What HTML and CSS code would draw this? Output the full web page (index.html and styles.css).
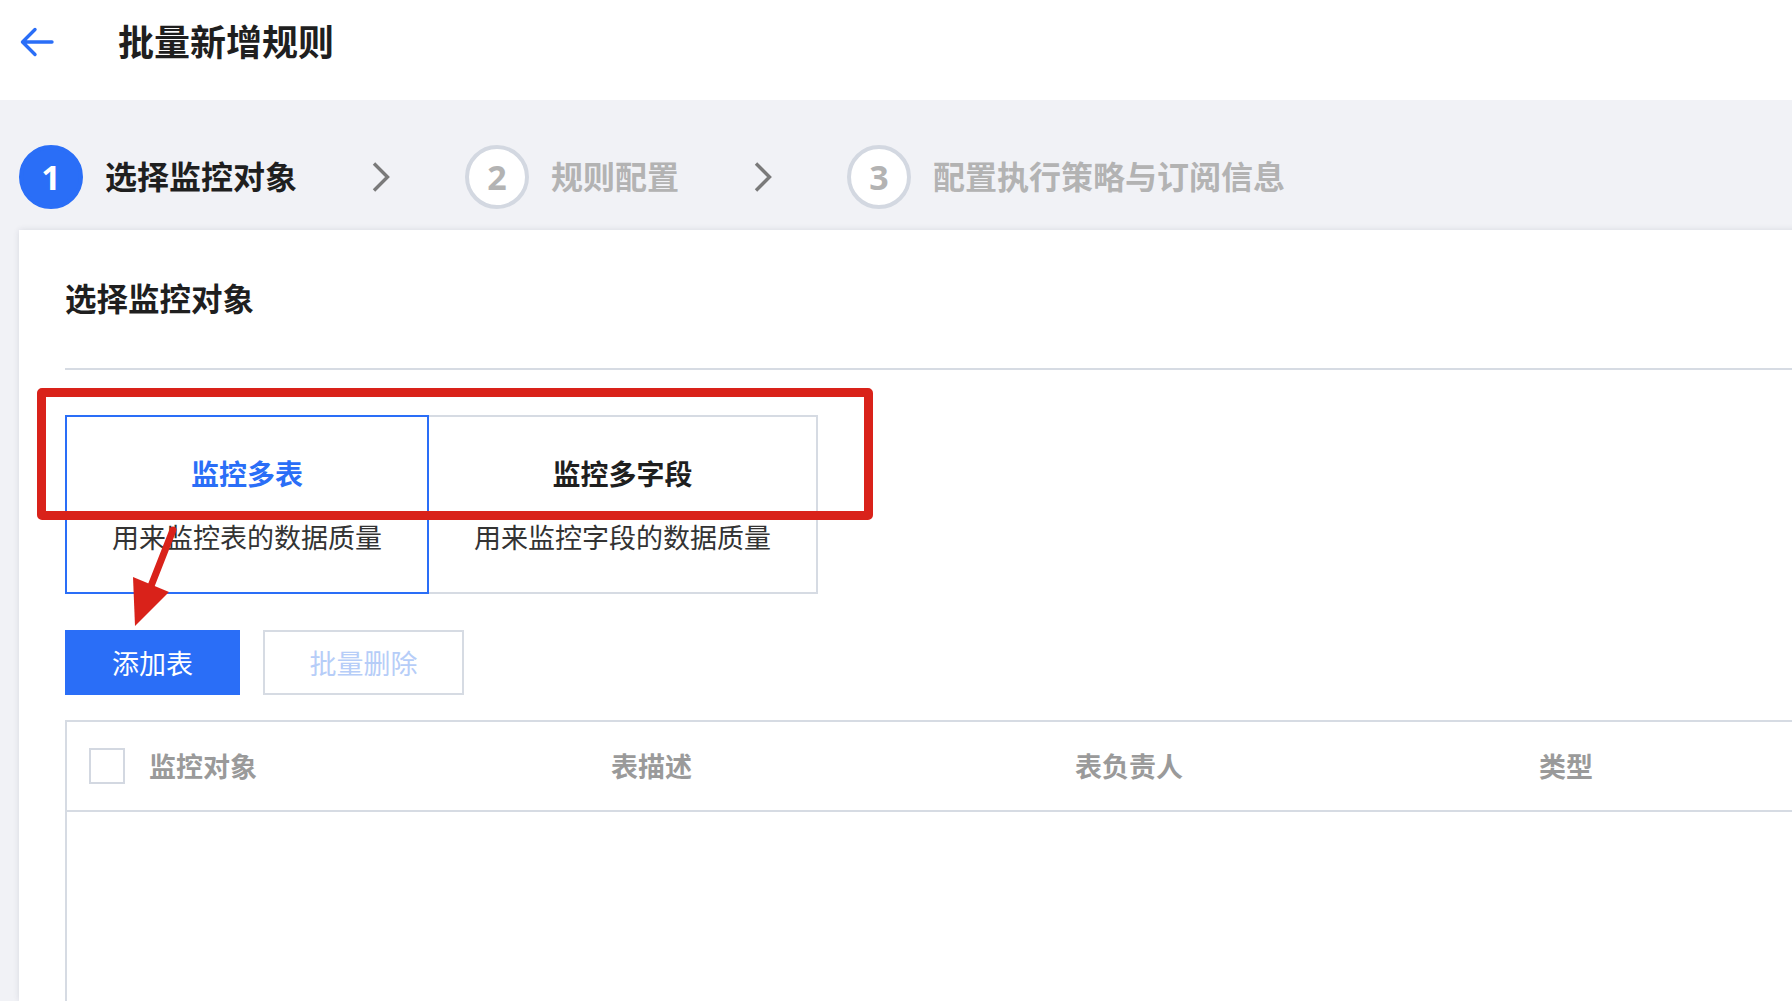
FILE: index.html
```html
<!DOCTYPE html>
<html lang="zh-CN">
<head>
<meta charset="utf-8">
<title>批量新增规则</title>
<link rel="stylesheet" href="styles.css">
</head>
<body>
<header class="topbar">
  <svg class="back" width="36" height="32" viewBox="0 0 36 32" aria-hidden="true">
    <path d="M34 16 H5 M17 3.5 L4.5 16 L17 28.5" fill="none" stroke="#2a6ef7" stroke-width="3.4" stroke-linecap="round" stroke-linejoin="round"/>
  </svg>
  <h1 class="page-title">批量新增规则</h1>
</header>

<nav class="steps">
  <div class="step active">
    <span class="step-num">1</span>
    <span class="step-label">选择监控对象</span>
  </div>
  <svg class="chev" width="20" height="32" viewBox="0 0 20 32" aria-hidden="true">
    <polyline points="3,2.5 16.5,16 3,29.5" fill="none" stroke="#7a7a7a" stroke-width="3.4"/>
  </svg>
  <div class="step">
    <span class="step-num">2</span>
    <span class="step-label">规则配置</span>
  </div>
  <svg class="chev" width="20" height="32" viewBox="0 0 20 32" aria-hidden="true">
    <polyline points="3,2.5 16.5,16 3,29.5" fill="none" stroke="#7a7a7a" stroke-width="3.4"/>
  </svg>
  <div class="step">
    <span class="step-num">3</span>
    <span class="step-label">配置执行策略与订阅信息</span>
  </div>
</nav>

<main class="card">
  <h2 class="card-title">选择监控对象</h2>
  <div class="divider"></div>

  <div class="tabs">
    <div class="tab selected">
      <div class="tab-title">监控多表</div>
      <div class="tab-desc">用来监控表的数据质量</div>
    </div>
    <div class="tab">
      <div class="tab-title">监控多字段</div>
      <div class="tab-desc">用来监控字段的数据质量</div>
    </div>
  </div>

  <div class="actions">
    <button class="btn btn-primary">添加表</button>
    <button class="btn btn-disabled">批量删除</button>
  </div>

  <div class="table">
    <div class="thead">
      <div class="th th-first"><span class="checkbox"></span><span>监控对象</span></div>
      <div class="th">表描述</div>
      <div class="th">表负责人</div>
      <div class="th">类型</div>
    </div>
    <div class="tbody"></div>
  </div>

  <div class="annot-box"></div>
  <svg class="annot-arrow" width="70" height="110" viewBox="0 0 70 110" aria-hidden="true">
    <line x1="53" y1="10" x2="31" y2="66" stroke="#d9221a" stroke-width="7" stroke-linecap="round"/>
    <polygon points="13,57 49,72 15,106" fill="#d9221a"/>
  </svg>
</main>
</body>
</html>
```

FILE: styles.css
```css
html, body {
  margin: 0;
  padding: 0;
  height: 100%;
  overflow: hidden;
}

body {
  background: #f1f2f6;
  font-family: "Noto Sans CJK SC", "Noto Sans", sans-serif;
  color: #222;
}

.topbar {
  height: 100px;
  box-sizing: border-box;
  background: #fff;
  display: flex;
  align-items: center;
  padding: 0 0 16px 18px;
}

.back {
  display: block;
}

.page-title {
  margin: 0 0 4px 64px;
  font-size: 36px;
  font-weight: 700;
  line-height: 48px;
  color: #1f1f1f;
}

.steps {
  display: flex;
  align-items: center;
  gap: 74px;
  padding: 45px 0 0 19px;
  height: 64px;
}

.step {
  display: flex;
  align-items: center;
  gap: 22px;
}

.step-num {
  width: 64px;
  height: 64px;
  box-sizing: border-box;
  border-radius: 50%;
  border: 4px solid #d3d8e1;
  background: #fff;
  color: #b3b3b3;
  display: flex;
  align-items: center;
  justify-content: center;
  font-family: "Noto Sans", "Liberation Sans", sans-serif;
  font-size: 34px;
  font-weight: 700;
}

.step.active .step-num {
  background: #2a6ef7;
  border-color: #2a6ef7;
  color: #fff;
}

.step-label {
  font-size: 32px;
  font-weight: 700;
  color: #b3b3b3;
  line-height: 44px;
  padding-bottom: 4px;
}

.step.active .step-label {
  color: #1f1f1f;
}

.chev {
  display: block;
}

.card {
  position: relative;
  box-sizing: border-box;
  margin: 21px -60px 0 19px;
  background: #fff;
  box-shadow: 0 0 6px rgba(30, 40, 70, 0.12);
  padding: 45px 0 0 46px;
  height: 771px;
  overflow: hidden;
}

.card-title {
  margin: 0;
  font-size: 31.5px;
  font-weight: 700;
  line-height: 45px;
  color: #1f1f1f;
}

.divider {
  margin-top: 48px;
  height: 2px;
  background: #d6dbe3;
}

.tabs {
  display: flex;
  margin-top: 45px;
}

.tab {
  box-sizing: border-box;
  width: 389px;
  border: 2px solid #d6dbe3;
  border-left: none;
  padding: 38px 0 37px;
  text-align: center;
}

.tab.selected {
  width: 364px;
  border: 2px solid #2a6ef7;
}

.tab-title {
  font-size: 28px;
  font-weight: 700;
  line-height: 36px;
  color: #1f1f1f;
}

.tab.selected .tab-title {
  color: #2a6ef7;
}

.tab-desc {
  margin-top: 28px;
  font-size: 27px;
  line-height: 36px;
  color: #333;
}

.actions {
  display: flex;
  gap: 23px;
  margin-top: 36px;
}

.btn {
  height: 65px;
  box-sizing: border-box;
  font-family: inherit;
  font-size: 27px;
  padding: 0;
  border-radius: 0;
}

.btn-primary {
  width: 175px;
  background: #2a6ef7;
  border: none;
  color: #fff;
}

.btn-disabled {
  width: 201px;
  background: #fff;
  border: 2px solid #d6dbe3;
  color: #b6cdf8;
}

.table {
  margin-top: 25px;
  border-top: 2px solid #d6dbe3;
  border-left: 2px solid #d6dbe3;
}

.thead {
  display: grid;
  grid-template-columns: 522px 464px 464px 1fr;
  height: 88px;
  align-items: center;
  padding-left: 22px;
  border-bottom: 2px solid #d6dbe3;
}

.th {
  font-size: 27px;
  font-weight: 700;
  color: #9a9a9a;
  line-height: 36px;
}

.th-first {
  display: flex;
  align-items: center;
  gap: 24px;
}

.checkbox {
  width: 36px;
  height: 36px;
  box-sizing: border-box;
  border: 2px solid #d3d8e1;
  background: #fff;
}

.tbody {
  height: 200px;
}

.annot-box {
  position: absolute;
  left: 18px;
  top: 158px;
  width: 836px;
  height: 132px;
  box-sizing: border-box;
  border: 9px solid #d9221a;
  border-radius: 5px;
}

.annot-arrow {
  position: absolute;
  left: 101px;
  top: 290px;
}
```
